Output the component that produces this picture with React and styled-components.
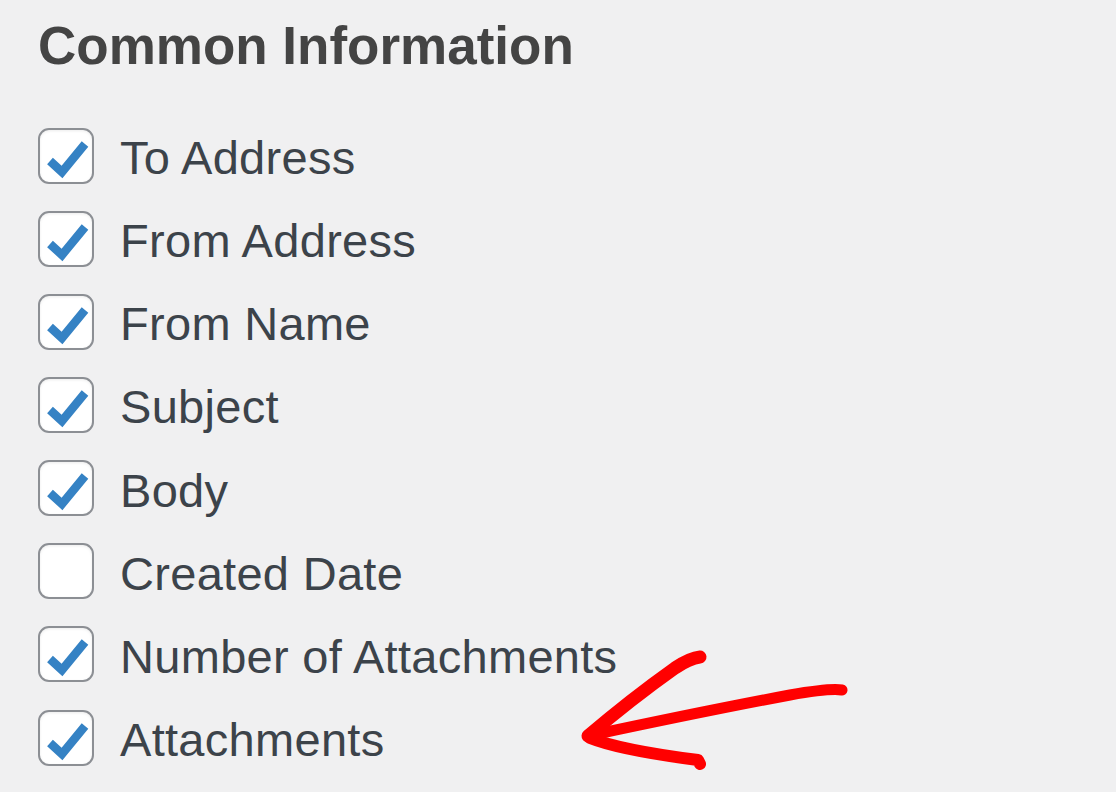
import React from 'react';
import styled, { createGlobalStyle } from 'styled-components';

const GlobalStyle = createGlobalStyle`
  html, body {
    margin: 0;
    padding: 0;
    background: #f0f0f1;
  }
  body {
    font-family: "Liberation Sans", Arial, Helvetica, sans-serif;
  }
`;

const Page = styled.div`
  position: relative;
  width: 1116px;
  height: 792px;
  overflow: hidden;
  padding: 0 38px;
  box-sizing: border-box;
`;

const Heading = styled.h2`
  margin: 0;
  padding-top: 14px;
  font-size: 53px;
  line-height: 64px;
  font-weight: 700;
  color: #444;
`;

const List = styled.div`
  display: flex;
  flex-direction: column;
  margin-top: 36px;
`;

const Row = styled.label`
  display: flex;
  align-items: center;
  height: 83.15px;
  gap: 26px;
`;

const Box = styled.span`
  position: relative;
  flex: none;
  width: 56px;
  height: 56px;
  box-sizing: border-box;
  border: 2px solid #8c8f94;
  border-radius: 11px;
  background: #fff;
  box-shadow: inset 0 1px 3px rgba(0, 0, 0, 0.08);
`;

const Tick = styled.svg`
  position: absolute;
  left: -2px;
  top: -2px;
`;

const Label = styled.span`
  font-size: 47px;
  letter-spacing: 0.3px;
  color: #3c434a;
  padding-top: 4px;
`;

const Arrow = styled.svg`
  position: absolute;
  left: 0;
  top: 0;
  pointer-events: none;
`;

const items = [
  ['To Address', true],
  ['From Address', true],
  ['From Name', true],
  ['Subject', true],
  ['Body', true],
  ['Created Date', false],
  ['Number of Attachments', true],
  ['Attachments', true],
];

const Checkbox = ({ checked }) => (
  <Box>
    {checked && (
      <Tick width="56" height="56" viewBox="0 0 56 56">
        <path d="M12 33 L24 44 L47 16" fill="none" stroke="#3582c4" strokeWidth="8.5" />
      </Tick>
    )}
  </Box>
);

export default function App() {
  return (
    <>
      <GlobalStyle />
      <Page>
        <Heading>Common Information</Heading>
        <List>
          {items.map(([text, checked]) => (
            <Row key={text}>
              <Checkbox checked={checked} />
              <Label>{text}</Label>
            </Row>
          ))}
        </List>
        <Arrow width="1116" height="792" viewBox="0 0 1116 792">
          <g fill="none" stroke="#ff0000" strokeLinecap="round" strokeLinejoin="round">
            <path d="M700 657 Q690 658 675 668 Q630 700 588 736" strokeWidth="13" />
            <path d="M588 736 Q700 712 790 695 Q830 688 842 690" strokeWidth="11" />
            <path d="M590 738 Q620 750 698 760 L700 764" strokeWidth="12" />
          </g>
        </Arrow>
      </Page>
    </>
  );
}
